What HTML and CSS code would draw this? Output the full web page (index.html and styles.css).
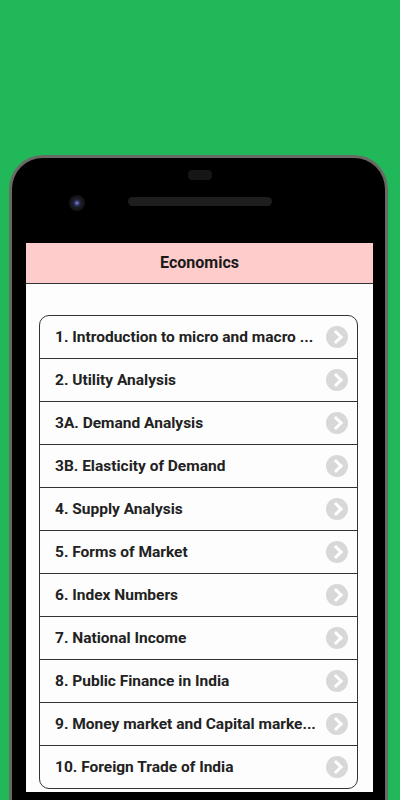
FILE: index.html
```html
<!DOCTYPE html>
<html lang="en">
<head>
    <meta charset="UTF-8">
    <meta name="viewport" content="width=device-width, initial-scale=1.0">
    <title>Economics</title>
    <link rel="stylesheet" href="styles.css">
</head>
<body>

    <div class="phone">
        <div class="phone-top">
            <div class="notch"></div>
            <div class="camera"></div>
            <div class="speaker"></div>
        </div>

        <div class="screen">
            <div class="app-bar">Economics</div>

            <div class="content">
                <ul class="chapter-list">
                    <li><span class="title">1. Introduction to micro and macro ...</span><span class="go"></span></li>
                    <li><span class="title">2. Utility Analysis</span><span class="go"></span></li>
                    <li><span class="title">3A. Demand Analysis</span><span class="go"></span></li>
                    <li><span class="title">3B. Elasticity of Demand</span><span class="go"></span></li>
                    <li><span class="title">4. Supply Analysis</span><span class="go"></span></li>
                    <li><span class="title">5. Forms of Market</span><span class="go"></span></li>
                    <li><span class="title">6. Index Numbers</span><span class="go"></span></li>
                    <li><span class="title">7. National Income</span><span class="go"></span></li>
                    <li><span class="title">8. Public Finance in India</span><span class="go"></span></li>
                    <li><span class="title">9. Money market and Capital marke...</span><span class="go"></span></li>
                    <li><span class="title">10. Foreign Trade of India</span><span class="go"></span></li>
                </ul>
            </div>
        </div>
    </div>

</body>
</html>
```

FILE: styles.css
```css
body {
    background: #21b85a;
    margin: 0;
    height: 800px;
    overflow: hidden;
    font-family: Roboto, 'Liberation Sans', sans-serif;
}

.phone {
    margin: 155px 0 0 9px;
    width: 379px;
    height: 645px;
    box-sizing: border-box;
    background: #000;
    border: 3px solid #6a6a64;
    border-bottom: none;
    border-radius: 34px 34px 0 0;
    padding: 0 12px 0 14px;
}

.phone-top {
    position: relative;
    height: 85px;
}

.notch {
    position: absolute;
    left: 162px;
    top: 12px;
    width: 24px;
    height: 10px;
    border-radius: 4px;
    background: #161616;
}

.camera {
    position: absolute;
    left: 43px;
    top: 37px;
    width: 16px;
    height: 16px;
    border-radius: 50%;
    background: radial-gradient(circle, #8a8cff 0, #3a3d6a 2px, #1b1d2c 4px, #111 8px);
}

.speaker {
    position: absolute;
    left: 102px;
    top: 39px;
    width: 144px;
    height: 9px;
    border-radius: 5px;
    background: #1e1e1e;
}

.screen {
    background: #fdfdfd;
    height: 549px;
}

.app-bar {
    height: 40px;
    line-height: 40px;
    background: #ffcccc;
    border-bottom: 1px solid #333;
    text-align: center;
    font-weight: 700;
    font-size: 16px;
    color: #1a1a1a;
}

.content {
    padding: 31px 15px 0 13px;
}

.chapter-list {
    list-style: none;
    margin: 0;
    padding: 0;
    border: 1px solid #333;
    border-radius: 10px;
    overflow: hidden;
}

.chapter-list li {
    display: flex;
    align-items: center;
    height: 42px;
    padding: 0 9px 0 15px;
    border-top: 1px solid #333;
}

.chapter-list li:first-child {
    border-top: none;
}

.title {
    flex: 1;
    font-weight: 700;
    font-size: 15.5px;
    color: #222;
    white-space: nowrap;
    padding-right: 6px;
}

.go {
    width: 22px;
    height: 22px;
    border-radius: 50%;
    background: #d8d8d8;
    position: relative;
}

.go::after {
    content: "";
    position: absolute;
    left: 5px;
    top: 6px;
    width: 7px;
    height: 7px;
    border-top: 3px solid #fff;
    border-right: 3px solid #fff;
    transform: rotate(45deg);
}
```
